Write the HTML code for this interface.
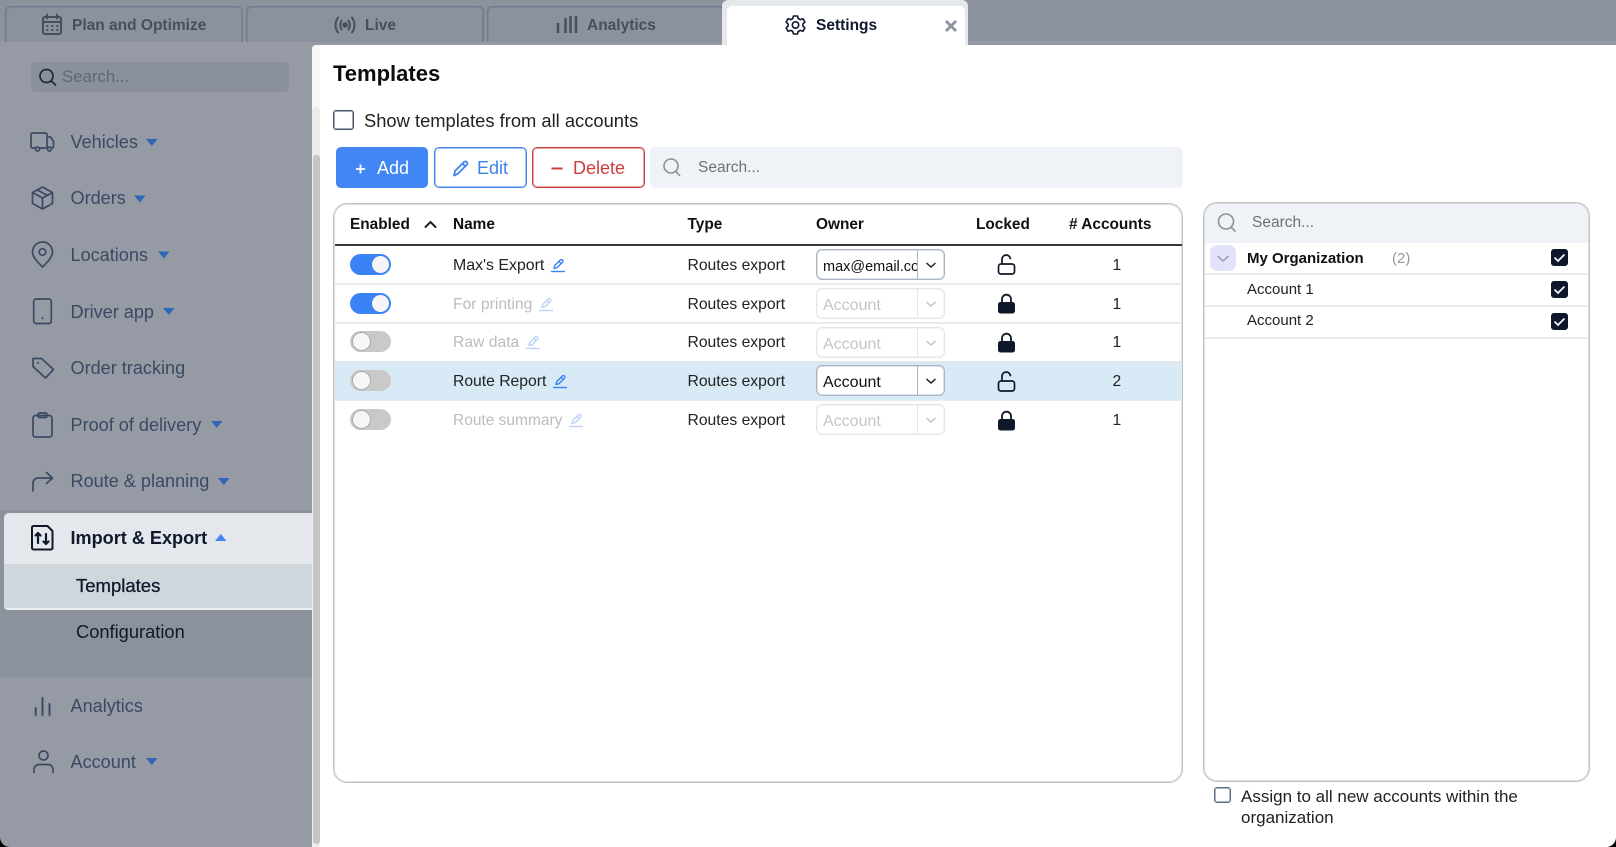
<!DOCTYPE html>
<html><head><meta charset="utf-8">
<style>
html,body{margin:0;padding:0;background:#000;}
#p{position:relative;width:1616px;height:847px;overflow:hidden;background:#959aa4;border-radius:0 0 10px 10px;font-family:"Liberation Sans",sans-serif;color:#1a1a1a;}
#p div,#p span.t{position:absolute;box-sizing:border-box;}
.t{white-space:nowrap;line-height:20px;height:20px;}
.tab{top:6px;height:36px;width:238px;border:1px solid #6e7a8f;border-bottom:0;box-shadow:inset 1px 1px 0 rgba(110,122,143,.5),inset -1px 0 0 rgba(110,122,143,.5);border-radius:5px 5px 0 0;background:#8b929d;}
.tt{top:16px;font-weight:bold;font-size:15.5px;color:#474f5e;}
.nav{left:70.5px;font-size:18.1px;color:#3b4a63;}
.sub{left:76px;font-size:18.3px;color:#10192b;}
.th{top:215px;font-weight:bold;font-size:15.4px;color:#111;}
.td{font-size:15.7px;color:#222;}
.dim{color:#bcbcbc;}
.tog{left:350px;width:41px;height:21px;border-radius:11px;}
.on{background:#3b82f6;}
.off{background:#c9c9c9;}
.kn{top:2px;width:17px;height:17px;border-radius:50%;background:#f6f6f6;}
.on .kn{left:22px;}
.off .kn{left:2px;border:1px solid #aaa;top:1px;width:19px;height:19px;}
.sel{left:816px;width:129px;height:31px;border:1px solid #aab5c4;box-shadow:inset 0 0 0 1px rgba(170,181,196,.4);border-radius:6px;background:#fff;overflow:hidden;font-size:16px;color:#111;}
.sel.d{border-color:#e6e6e6;box-shadow:inset 0 0 0 1px rgba(230,230,230,.4);color:#c6c6c6;background:transparent;}
.sel .dv{left:100px;top:0;width:1px;height:29px;background:#aab5c4;}
.sel.d .dv{background:#e6e6e6;}
.sel .v{left:6px;top:7px;line-height:20px;white-space:nowrap;width:94px;overflow:hidden;}
.ln{height:2px;background:#ebebeb;}
</style></head><body>
<div id="p">
<div style="left:0;top:0;width:1616px;height:41px;background:#8b929d"></div>
<div style="left:967px;top:41px;width:649px;height:4px;background:#959aa4"></div>
<div class="tab" style="left:5px"></div>
<div class="tab" style="left:246px"></div>
<div class="tab" style="left:487px;width:238px"></div>
<div style="left:722px;top:0;width:246px;height:46px;background:#e4e8ec;border-radius:6px 6px 0 0"></div>
<div style="left:727px;top:6px;width:238px;height:40px;background:#fff;border-radius:5px 5px 0 0"></div>
<span class="t tt" style="left:72px">Plan and Optimize</span>
<span class="t tt" style="left:365px">Live</span>
<span class="t tt" style="left:587px">Analytics</span>
<span class="t tt" style="left:816px;color:#10192b">Settings</span>

<!-- sidebar -->
<div style="left:31px;top:62px;width:258px;height:30px;background:#8a919c;border-radius:5px"></div>
<span class="t" style="left:62px;top:67px;font-size:16.8px;color:#5f6877">Search...</span>
<span class="t nav" style="top:132px">Vehicles</span>
<span class="t nav" style="top:188px">Orders</span>
<span class="t nav" style="top:245px">Locations</span>
<span class="t nav" style="top:302px">Driver app</span>
<span class="t nav" style="top:358px">Order tracking</span>
<span class="t nav" style="top:415px">Proof of delivery</span>
<span class="t nav" style="top:471px">Route &amp; planning</span>
<div style="left:0;top:510px;width:312px;height:167px;background:#8b929c"></div>
<div style="left:4px;top:513px;width:308px;height:51px;background:#e4e8ec;border-radius:5px 0 0 0"></div>
<div style="left:4px;top:564px;width:308px;height:46px;background:#cfd6dc;border-bottom:2px solid #e9edf0;border-radius:0 0 0 4px"></div>
<span class="t nav" style="top:528px;font-weight:bold;color:#10192b">Import &amp; Export</span>
<span class="t sub" style="top:576px;font-size:18.5px;-webkit-text-stroke:.3px #10192b">Templates</span>
<span class="t sub" style="top:622px">Configuration</span>
<span class="t nav" style="top:696px">Analytics</span>
<span class="t nav" style="top:752px">Account</span>

<!-- main -->
<div style="left:312px;top:45px;width:1304px;height:802px;background:#fff;border-radius:4px 0 0 0"></div>
<div style="left:312px;top:45px;width:8px;height:802px;background:#f7f7f7;border-radius:4px 0 0 0"></div>
<div style="left:312px;top:107px;width:8px;height:740px;background:#ececec;border-radius:4px"></div>
<div style="left:313px;top:155px;width:7px;height:689px;background:#c4c4c4;border-radius:4px"></div>

<span class="t" style="left:333px;top:64px;font-size:22px;font-weight:bold;color:#0c0c0c">Templates</span>
<div style="left:333px;top:110px;width:21px;height:20px;border:1px solid #475569;box-shadow:inset 0 0 0 1px rgba(71,85,105,.5);border-radius:3px;background:#fff"></div>
<span class="t" style="left:364px;top:111px;font-size:18.35px;color:#222">Show templates from all accounts</span>

<div style="left:336px;top:147px;width:92px;height:41px;background:#4285f4;border-radius:5px"></div>
<span class="t" style="left:377px;top:158px;font-size:18px;color:#fff">Add</span>
<div style="left:434px;top:147px;width:93px;height:41px;border:1px solid #3f84ea;box-shadow:inset 0 0 0 1px rgba(63,132,234,.45);border-radius:5px;background:#fff"></div>
<span class="t" style="left:477px;top:158px;font-size:18px;color:#3f84ea">Edit</span>
<div style="left:532px;top:147px;width:113px;height:41px;border:1px solid #c9403f;box-shadow:inset 0 0 0 1px rgba(201,64,63,.45);border-radius:5px;background:#fff"></div>
<span class="t" style="left:573px;top:158px;font-size:18px;color:#c9403f">Delete</span>
<div style="left:650px;top:147px;width:533px;height:41px;background:#eff2f6;border-radius:5px"></div>
<span class="t" style="left:698px;top:158px;font-size:15.5px;color:#6d7278">Search...</span>

<!-- table -->
<div style="left:333px;top:203px;width:850px;height:580px;border:1px solid #c2c2c2;box-shadow:inset 0 0 0 1px rgba(194,194,194,.5);border-radius:14px;background:#fff"></div>
<div style="left:335px;top:244px;width:847px;height:2px;background:#3a3a3a"></div>
<div class="ln" style="left:335px;top:283px;width:847px"></div>
<div class="ln" style="left:335px;top:322px;width:847px"></div>
<div style="left:335px;top:361px;width:847px;height:40px;background:#d7eaf6;border-top:2px solid #e2e6e8;border-bottom:1px solid #c9d9e3"></div>
<div class="ln" style="left:335px;top:400px;width:847px;height:1px"></div>
<span class="t th" style="left:350px">Enabled</span>
<span class="t th" style="left:453px">Name</span>
<span class="t th" style="left:687.500px">Type</span>
<span class="t th" style="left:816px">Owner</span>
<span class="t th" style="left:976px">Locked</span>
<span class="t th" style="left:1069px"># Accounts</span>

<div class="tog on" style="top:254px"><div class="kn"></div></div>
<div class="tog on" style="top:293px"><div class="kn"></div></div>
<div class="tog off" style="top:331px"><div class="kn"></div></div>
<div class="tog off" style="top:370px"><div class="kn"></div></div>
<div class="tog off" style="top:409px"><div class="kn"></div></div>

<span class="t td" style="left:453px;top:256px;font-size:15.9px">Max's Export</span>
<span class="t td dim" style="left:453px;top:295px">For printing</span>
<span class="t td dim" style="left:453px;top:333px">Raw data</span>
<span class="t td" style="left:453px;top:372px">Route Report</span>
<span class="t td dim" style="left:453px;top:411px;font-size:15.5px">Route summary</span>

<span class="t td" style="left:687.500px;top:256px">Routes export</span>
<span class="t td" style="left:687.500px;top:295px">Routes export</span>
<span class="t td" style="left:687.500px;top:333px">Routes export</span>
<span class="t td" style="left:687.500px;top:372px">Routes export</span>
<span class="t td" style="left:687.500px;top:411px">Routes export</span>

<div class="sel" style="top:249px;font-size:14.5px"><div class="v">max@email.com</div><div class="dv"></div></div>
<div class="sel d" style="top:288px"><div class="v">Account</div><div class="dv"></div></div>
<div class="sel d" style="top:327px"><div class="v">Account</div><div class="dv"></div></div>
<div class="sel" style="top:365px"><div class="v">Account</div><div class="dv"></div></div>
<div class="sel d" style="top:404px"><div class="v">Account</div><div class="dv"></div></div>

<span class="t td" style="left:1112.500px;top:256px">1</span>
<span class="t td" style="left:1112.500px;top:295px">1</span>
<span class="t td" style="left:1112.500px;top:333px">1</span>
<span class="t td" style="left:1112.500px;top:372px">2</span>
<span class="t td" style="left:1112.500px;top:411px">1</span>

<!-- right panel -->
<div style="left:1203px;top:202px;width:387px;height:580px;border:1px solid #c2c2c2;border-radius:14px;background:#fff;overflow:hidden"><div style="left:0;top:0;width:385px;height:40px;background:#eff2f6"></div></div>
<div style="left:1204px;top:203px;width:385px;height:578px;box-shadow:inset 0 0 0 1px rgba(194,194,194,.5);border-radius:13px"></div>
<span class="t" style="left:1252px;top:213px;font-size:15.5px;color:#6d7278">Search...</span>
<div class="ln" style="left:1205px;top:273px;width:383px"></div>
<div class="ln" style="left:1205px;top:305px;width:383px"></div>
<div class="ln" style="left:1205px;top:337px;width:383px"></div>
<div style="left:1210px;top:245px;width:26px;height:26px;background:#e2e2fa;border-radius:7px"></div>
<span class="t" style="left:1247px;top:248.500px;font-size:15px;font-weight:bold;color:#111">My Organization</span>
<span class="t" style="left:1392px;top:248.500px;font-size:15px;color:#9a9a9a">(2)</span>
<span class="t" style="left:1247px;top:280px;font-size:15px;color:#222">Account 1</span>
<span class="t" style="left:1247px;top:311px;font-size:15px;color:#222">Account 2</span>
<div style="left:1551px;top:249px;width:17px;height:17px;background:#0f172a;border-radius:3px"></div>
<div style="left:1551px;top:281px;width:17px;height:17px;background:#0f172a;border-radius:3px"></div>
<div style="left:1551px;top:313px;width:17px;height:17px;background:#0f172a;border-radius:3px"></div>

<div style="left:1214px;top:787px;width:17px;height:16px;border:1px solid #5a6b85;box-shadow:inset 0 0 0 1px rgba(90,107,133,.5);border-radius:3px;background:#fff"></div>
<span class="t" style="left:1241px;top:787px;font-size:17px;color:#222">Assign to all new accounts within the</span>
<span class="t" style="left:1241px;top:808px;font-size:17px;color:#222">organization</span>

<svg width="1616" height="847" viewBox="0 0 1616 847" style="position:absolute;left:0;top:0" fill="none">
<!-- tab icons -->
<g stroke="#474f5e" stroke-width="2" stroke-linecap="round">
<rect x="43" y="17" width="18" height="17" rx="2"/>
<path d="M47 14.5v4M57 14.5v4M43 22h18"/>
<path d="M47 26h.5M52 26h.5M57 26h.5M47 30h.5M52 30h.5M57 30h.5" stroke-width="2"/>
<path d="M338 17.500q-5 7.500 0 15M341.500 20.500q-2.500 4.500 0 9M352 17.500q5 7.500 0 15M348.500 20.500q2.500 4.500 0 9"/>
<circle cx="345" cy="25" r="1.800" fill="#474f5e"/>
<path d="M558 33v-10M565.500 33v-15M570.500 33v-17M576 33v-17" stroke-width="2.500" stroke-linecap="butt"/>
</g>
<g stroke="#10192b" stroke-width="1.600" stroke-linejoin="round" transform="translate(0,1)">
<path d="M793.500 15h4l.8 2.600 2 1 2.600-.9 2 3.400-2 1.900v2l2 1.900-2 3.400-2.600-.9-2 1-.8 2.600h-4l-.8-2.600-2-1-2.600.9-2-3.400 2-1.900v-2l-2-1.900 2-3.400 2.600.9 2-1z"/>
<circle cx="795.500" cy="24" r="3.200"/>
</g>
<path d="M946 21l10 10M956 21l-10 10" stroke="#8b929d" stroke-width="2.800"/>

<!-- sidebar icons -->
<g stroke="#3b4a63" stroke-width="1.700" stroke-linecap="round" stroke-linejoin="round">
<circle cx="46.500" cy="76" r="6.500" stroke="#1e2a3c"/><path d="M51.500 81l4 4" stroke="#1e2a3c"/>
<path d="M35.500 148h-3a1.500 1.500 0 0 1-1.500-1.500v-12a1.500 1.500 0 0 1 1.500-1.500h13a1.500 1.500 0 0 1 1.500 1.500v13.500M40 148h7.500M47 137h3.500l3 4.500v5a1.500 1.500 0 0 1-1.500 1.500h-.5"/>
<circle cx="37.500" cy="149" r="2"/><circle cx="49.500" cy="149" r="2"/>
<path d="M42.500 187l10 5.500v11l-10 5.500-10-5.500v-11zM32.500 192.500l10 5.500 10-5.500M42.500 198v11M37.500 190l10 5.500"/>
<path d="M42.500 267c-5-5-10-10-10-15a10 10 0 0 1 20 0c0 5-5 10-10 15z"/><circle cx="42.500" cy="252" r="3.300"/>
<rect x="33.700" y="299" width="17.600" height="24.500" rx="2.500"/><path d="M42.500 318.300h.1" stroke-width="2"/>
<path d="M33 358.500h8.500l12 11-8 8.500-12.500-11.500z"/><path d="M38 363h.1" stroke-width="2"/>
<rect x="33" y="415.500" width="19" height="21.500" rx="2.500"/><rect x="38" y="413" width="9" height="4.500" rx="1.500"/>
<path d="M33 491v-8a5 5 0 0 1 5-5h14M46.500 472.500l6 5.500-6 5.500"/>
<g stroke="#10192b" transform="translate(-1,0)"><path d="M33 527.500a1.500 1.500 0 0 1 1.500-1.500h14l5 5v17a1.500 1.500 0 0 1-1.500 1.500h-17.500a1.500 1.500 0 0 1-1.500-1.500z" stroke-width="2"/></g>
<g stroke="#10192b" stroke-width="2.200" transform="translate(-1,0)"><path d="M39 543v-10M36.500 535.500l2.500-2.500 2.500 2.500M47 534v10M44.500 541.500l2.500 2.500 2.500-2.500"/></g>
<path d="M35.700 715v-7M42.500 715v-17M49.500 715v-11" stroke-width="2"/>
<circle cx="43.500" cy="755.500" r="4.500"/><path d="M34 772.500v-3a5 5 0 0 1 5-5h9a5 5 0 0 1 5 5v3"/>
</g>
<g fill="#2f66b8">
<path d="M146 139h11.500l-5.700 7z"/><path d="M134 195.500h11.500l-5.700 7z"/><path d="M158 251.500h11.500l-5.700 7z"/>
<path d="M163 308h11.500l-5.700 7z"/><path d="M211 421h11.500l-5.700 7z"/><path d="M218 478h11.500l-5.700 7z"/><path d="M146 758h11.500l-5.700 7z"/>
<path d="M215 541h11.500l-5.700-7z" fill="#4285f4"/>
</g>

<!-- buttons -->
<path d="M356 169h9M360.500 164.500v9" stroke="#fff" stroke-width="1.800"/>
<path d="M454 175.500l1-4.500 9-9a2 2 0 0 1 2.800 0 2 2 0 0 1 0 2.800l-9 9zM462.500 163.500l3 3" stroke="#3f84ea" stroke-width="1.800" stroke-linejoin="round"/>
<path d="M551.500 168.500h11" stroke="#c9403f" stroke-width="2"/>
<circle cx="671" cy="166" r="7" stroke="#8d9196" stroke-width="1.600"/><path d="M676 171.500l4 4.500" stroke="#8d9196" stroke-width="1.600"/>
<circle cx="1226" cy="221.500" r="7.500" stroke="#8d9196" stroke-width="1.600"/><path d="M1231.500 227.500l4 4" stroke="#8d9196" stroke-width="1.600"/>

<!-- header chevron -->
<path d="M425.500 227l5-5 5 5" stroke="#222" stroke-width="2" stroke-linecap="round"/>

<!-- row pencils -->
<defs><g id="pen"><path d="M3 10.500l.8-3 5.500-5.500a1.500 1.500 0 0 1 2.200 2.200l-5.500 5.500zM8 3.500l2.200 2.200" stroke-width="1.400" stroke-linejoin="round"/><path d="M0 13.500h14" stroke-width="1.400"/></g>
<g id="lo"><rect x="1" y="10" width="16" height="10" rx="2.500" stroke="#0f172a" stroke-width="1.700"/><path d="M4.500 10V5.200a4.200 4.200 0 0 1 8.400 0" stroke="#0f172a" stroke-width="1.700"/></g>
<g id="lc"><rect x="0.500" y="8" width="17" height="11.500" rx="2.500" fill="#0f172a"/><path d="M4.500 9V5.200a4.500 4.500 0 0 1 9 0V9" stroke="#0f172a" stroke-width="1.800"/></g>
<path id="ck" d="M0 4.500l3.500 3.500 6.500-6.500" stroke="#fff" stroke-width="1.700"/></defs>
<use href="#pen" x="551" y="258" stroke="#3b82f6"/>
<use href="#pen" x="539" y="297" stroke="#bcd3f8"/>
<use href="#pen" x="526" y="335" stroke="#bcd3f8"/>
<use href="#pen" x="553" y="374" stroke="#3b82f6"/>
<use href="#pen" x="569" y="413" stroke="#bcd3f8"/>

<!-- select chevrons -->
<path d="M926.500 263l4.500 4 4.500-4" stroke="#222" stroke-width="1.500"/>
<path d="M926.500 302l4.500 4 4.500-4" stroke="#c2c2c2" stroke-width="1.500"/>
<path d="M926.500 341l4.500 4 4.500-4" stroke="#c2c2c2" stroke-width="1.500"/>
<path d="M926.500 379l4.500 4 4.500-4" stroke="#222" stroke-width="1.500"/>
<path d="M926.500 418l4.500 4 4.500-4" stroke="#c2c2c2" stroke-width="1.500"/>

<!-- locks -->
<use href="#lo" x="997.500" y="254"/>
<use href="#lc" x="997.500" y="294"/>
<use href="#lc" x="997.500" y="333"/>
<use href="#lo" x="997.500" y="371"/>
<use href="#lc" x="997.500" y="411"/>

<!-- right panel icons -->
<path d="M1217.500 256l5.500 5 5.500-5" stroke="#9a9aa8" stroke-width="1.500"/>
<use href="#ck" x="1554.500" y="253"/>
<use href="#ck" x="1554.500" y="285"/>
<use href="#ck" x="1554.500" y="317"/>
</svg>
</div>
</body></html>
